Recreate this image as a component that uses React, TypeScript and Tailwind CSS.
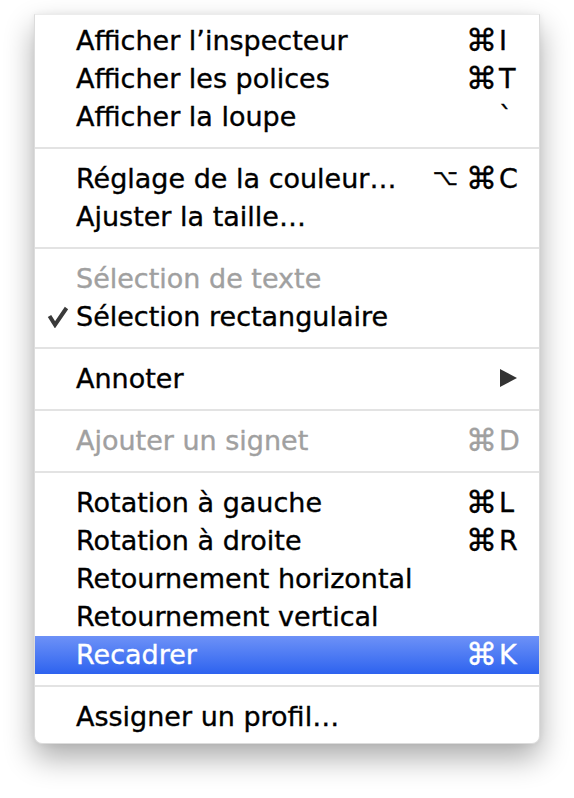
import React from "react";

type Item =
  | { sep: true }
  | {
      sep?: false;
      label: string;
      opt?: boolean;
      cmd?: boolean;
      keyc?: string;
      disabled?: boolean;
      checked?: boolean;
      submenu?: boolean;
      active?: boolean;
    };

const items: Item[] = [
  { label: "Afficher l’inspecteur", cmd: true, keyc: "I" },
  { label: "Afficher les polices", cmd: true, keyc: "T" },
  { label: "Afficher la loupe", keyc: "`" },
  { sep: true },
  { label: "Réglage de la couleur…", opt: true, cmd: true, keyc: "C" },
  { label: "Ajuster la taille…" },
  { sep: true },
  { label: "Sélection de texte", disabled: true },
  { label: "Sélection rectangulaire", checked: true },
  { sep: true },
  { label: "Annoter", submenu: true },
  { sep: true },
  { label: "Ajouter un signet", cmd: true, keyc: "D", disabled: true },
  { sep: true },
  { label: "Rotation à gauche", cmd: true, keyc: "L" },
  { label: "Rotation à droite", cmd: true, keyc: "R" },
  { label: "Retournement horizontal" },
  { label: "Retournement vertical" },
  { label: "Recadrer", cmd: true, keyc: "K", active: true },
  { sep: true },
  { label: "Assigner un profil…" },
];

function Check() {
  return (
    <svg width="22" height="22" viewBox="0 0 22 22" className="block">
      <path
        d="M2.5 10 L8 18.8 L19.5 2"
        fill="none"
        stroke="#3a3a3a"
        strokeWidth="4"
        strokeLinecap="butt"
        strokeLinejoin="miter"
      />
    </svg>
  );
}

function Triangle() {
  return (
    <svg width="17" height="18" viewBox="0 0 17 18" className="block ml-[1px]">
      <polygon points="0,0 17,9 0,18" fill="#333333" />
    </svg>
  );
}

export default function App() {
  return (
    <div className="min-h-[798px] w-[574px] bg-white pt-[14px] pl-[34px]">
      <div
        className="w-[506px] bg-white rounded-b-[8px] border border-[#dcdcdc] border-t-[#ececec] pt-[7px] pb-[7px] shadow-[0_14px_30px_rgba(0,0,0,0.33),0_0_6px_rgba(0,0,0,0.06)] text-[27px] leading-none text-black [-webkit-text-stroke:0.35px_currentColor]"
        style={{ fontFamily: '"DejaVu Sans", "Liberation Sans", sans-serif' }}
      >
        {items.map((it, i) =>
          it.sep ? (
            <div key={i} className="h-[24px] flex items-center">
              <div className="h-[2px] w-full bg-[#e3e3e3]" />
            </div>
          ) : (
            <div
              key={i}
              className={
                "h-[38px] flex items-center pl-[12px] pb-[2px] " +
                (it.active
                  ? "bg-linear-to-b from-[#6d91f7] to-[#2d62ef] text-white"
                  : it.disabled
                  ? "text-[#a0a0a0]"
                  : "text-black")
              }
            >
              <div className="w-[29px] flex items-center pt-[2px]">
                {it.checked ? <Check /> : null}
              </div>
              <div className="flex-1 whitespace-nowrap">{it.label}</div>
              <div className="whitespace-nowrap flex items-center">
                {it.opt ? <span className="mr-[8px] text-[22px]">⌥</span> : null}
                {it.cmd ? <span className="text-[31px]">⌘</span> : null}
              </div>
              <div className="w-[42px] pl-[2px] whitespace-nowrap">
                {it.submenu ? <Triangle /> : it.keyc ?? ""}
              </div>
            </div>
          )
        )}
      </div>
    </div>
  );
}
